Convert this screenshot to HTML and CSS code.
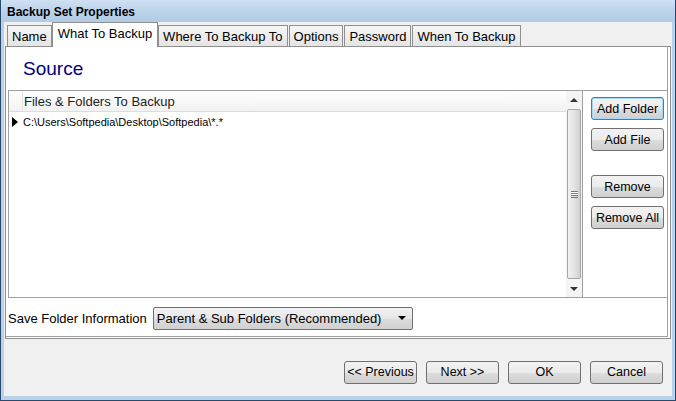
FILE: index.html
```html
<!DOCTYPE html>
<html>
<head>
  <title>Backup Set Properties</title>
  <link rel="stylesheet" href="styles.css">
</head>
<body>
  <div class="window">
    <div class="titlebar">Backup Set Properties</div>

    <div class="client">
      <!-- tab strip -->
      <div class="tabs">
        <div class="tab">Name</div>
        <div class="tab active">What To Backup</div>
        <div class="tab">Where To Backup To</div>
        <div class="tab">Options</div>
        <div class="tab">Password</div>
        <div class="tab">When To Backup</div>
      </div>

      <div class="panel">
        <h1 class="heading">Source</h1>

        <div class="grid-frame">
          <div class="grid">
            <div class="grid-rows">
              <div class="grid-head">
                <div class="row-head"></div>
                <div class="col-head">Files &amp; Folders To Backup</div>
              </div>
              <div class="grid-row">
                <div class="row-head"><span class="arrow"></span></div>
                <div class="cell">C:\Users\Softpedia\Desktop\Softpedia\*.*</div>
              </div>
            </div>
            <div class="scrollbar">
              <div class="sb-btn"><span class="up"></span></div>
              <div class="sb-thumb"><span class="grip"></span></div>
              <div class="sb-btn"><span class="down"></span></div>
            </div>
          </div>
          <div class="side-buttons">
            <button class="btn focused">Add Folder</button>
            <button class="btn">Add File</button>
            <button class="btn gap">Remove</button>
            <button class="btn">Remove All</button>
          </div>
        </div>

        <div class="save-row">
          <label>Save Folder Information</label>
          <div class="select">
            <span>Parent &amp; Sub Folders (Recommended)</span>
            <span class="caret"></span>
          </div>
        </div>
      </div>

      <div class="footer">
        <button class="btn">&lt;&lt; Previous</button>
        <button class="btn">Next &gt;&gt;</button>
        <button class="btn">OK</button>
        <button class="btn">Cancel</button>
      </div>
    </div>
  </div>
</body>
</html>
```

FILE: styles.css
```css
/* window chrome */
body {
  margin: 0;
  background: #1c2f45;
  font-family: "Liberation Sans", Arial, sans-serif;
  font-size: 13px;
  color: #000;
}

.window {
  width: 676px;
  height: 401px;
  box-sizing: border-box;
  display: flex;
  flex-direction: column;
  background: #b9d1ea;
  border: 1px solid #2b4a6b;
  border-top: none;
}

.titlebar {
  height: 22px;
  line-height: 24px;
  padding-left: 6px;
  font-weight: bold;
  font-size: 12px;
  background: linear-gradient(to bottom, #cfe0f2 0%, #bcd3ea 50%, #b1cbe6 100%);
}

.client {
  flex: 1;
  margin: 0 3px 4px 3px;
  background: #f0f0f0;
  display: flex;
  flex-direction: column;
}

/* tabs */
.tabs {
  display: flex;
  padding-left: 3px;
  height: 24px;
  align-items: flex-end;
  position: relative;
  z-index: 1;
}

.tab {
  height: 20px;
  line-height: 21px;
  padding: 0 4px;
  border: 1px solid #8f8f8f;
  border-bottom: none;
  background: linear-gradient(to bottom, #f6f6f6, #e4e4e4);
  margin-right: 1px;
  white-space: nowrap;
}

.tab.active {
  height: 24px;
  line-height: 22px;
  padding: 0 5px;
  background: #fff;
  margin: 0 0 -1px -1px;
  border-color: #8f8f8f;
}

.panel {
  height: 291px;
  margin: 0 1px 0 1px;
  background: #fff;
  border: 1px solid #8f8f8f;
  box-shadow: inset -2px -1px 0 #fff, inset -3px -2px 0 #a0a0a0;
  display: flex;
  flex-direction: column;
  padding: 0 2px;
}

.heading {
  margin: 0;
  height: 43px;
  line-height: 44px;
  padding-left: 15px;
  font-size: 19px;
  font-weight: normal;
  color: #000080;
}

/* list + buttons */
.grid-frame {
  display: flex;
  height: 207px;
  border: 1px solid #a0a0a0;
  margin-right: 0;
}

.grid {
  flex: 1;
  display: flex;
  border-right: 1px solid #a0a0a0;
}

.grid-rows {
  flex: 1;
}

.grid-head {
  display: flex;
  height: 20px;
  background: linear-gradient(to bottom, #ffffff, #f2f2f2);
  border-bottom: 1px solid #dcdcdc;
}

.grid-head .row-head {
  border-right: 1px solid #e4e4e4;
}

.row-head {
  width: 13px;
  flex: none;
}

.col-head {
  padding-left: 1px;
  line-height: 21px;
  color: #222;
}

.grid-row {
  display: flex;
  height: 19px;
  line-height: 20px;
  font-size: 11px;
}

.cell {
  padding-left: 1px;
}

.arrow {
  display: inline-block;
  margin: 5px 0 0 3px;
  border-left: 6px solid #000;
  border-top: 5px solid transparent;
  border-bottom: 5px solid transparent;
}

.scrollbar {
  width: 16px;
  display: flex;
  flex-direction: column;
  background: #f4f4f4;
}

.sb-btn {
  height: 17px;
  display: flex;
  align-items: center;
  justify-content: center;
}

.up {
  border-bottom: 4px solid #333;
  border-left: 4px solid transparent;
  border-right: 4px solid transparent;
}

.down {
  border-top: 4px solid #333;
  border-left: 4px solid transparent;
  border-right: 4px solid transparent;
}

.sb-thumb {
  flex: 1;
  margin: 1px 1px;
  border: 1px solid #a8a8a8;
  border-radius: 2px;
  background: linear-gradient(to right, #f0f0f0, #e0e0e0 60%, #cfcfcf);
  display: flex;
  align-items: center;
  justify-content: center;
}

.grip {
  width: 7px;
  height: 5px;
  border-top: 1px solid #777;
  border-bottom: 1px solid #777;
  background: linear-gradient(#fff 0 1px, #777 1px 2px, #fff 2px 3px, #777 3px 4px, transparent 4px);
}

.side-buttons {
  width: 81px;
  display: flex;
  flex-direction: column;
  align-items: flex-end;
  padding: 6px 3px 0 0;
}

.side-buttons .btn {
  margin-bottom: 8px;
}

.side-buttons .gap {
  margin-top: 16px;
}

.btn {
  width: 73px;
  height: 23px;
  padding: 0;
  border: 1px solid #707070;
  border-radius: 3px;
  background: linear-gradient(to bottom, #f2f2f2 0%, #ebebeb 50%, #dddddd 51%, #cfcfcf 100%);
  font-family: "Liberation Sans", Arial, sans-serif;
  font-size: 12.5px;
  color: #000;
}

.btn.focused {
  border-color: #3c7fb1;
  box-shadow: inset 0 0 0 1px #a6d8f3;
}

/* save folder row */
.save-row {
  display: flex;
  align-items: center;
  height: 40px;
  padding-left: 0;
}

.save-row label {
  margin-right: 6px;
}

.select {
  width: 260px;
  height: 23px;
  box-sizing: border-box;
  display: flex;
  align-items: center;
  justify-content: space-between;
  padding: 0 6px 0 3px;
  border: 1px solid #707070;
  border-radius: 2px;
  background: linear-gradient(to bottom, #f2f2f2, #e6e6e6 50%, #dcdcdc 51%, #d0d0d0);
}

.caret {
  border-top: 4px solid #000;
  border-left: 4px solid transparent;
  border-right: 4px solid transparent;
}

/* bottom buttons */
.footer {
  flex: 1;
  display: flex;
  justify-content: flex-end;
  align-items: center;
  gap: 9px;
  padding-right: 9px;
  padding-top: 9px;
}

.footer .btn {
  width: 73px;
}
```
